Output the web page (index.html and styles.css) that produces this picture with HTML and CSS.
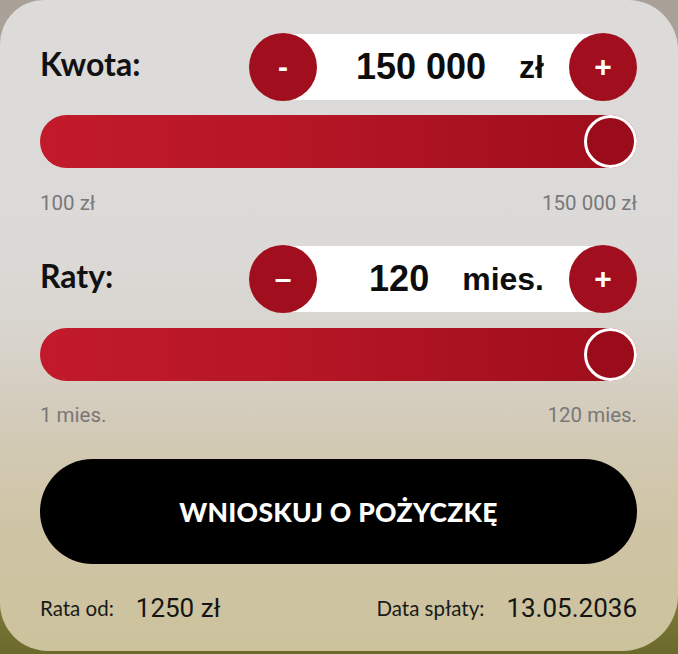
FILE: index.html
```html
<!DOCTYPE html>
<html lang="pl">
<head>
<meta charset="utf-8">
<title>Kalkulator pożyczki</title>
<link rel="stylesheet" href="styles.css">
</head>
<body>
<div class="card">
  <div class="field-head">
    <div class="label">Kwota:</div>
    <div class="stepper">
      <div class="step-btn">-</div>
      <div class="step-value"><span class="num">150 000</span><span class="unit">zł</span></div>
      <div class="step-btn">+</div>
    </div>
  </div>
  <div class="slider"><div class="thumb"></div></div>
  <div class="range"><span>100 zł</span><span>150 000 zł</span></div>

  <div class="field-head second">
    <div class="label">Raty:</div>
    <div class="stepper">
      <div class="step-btn">–</div>
      <div class="step-value"><span class="num">120</span><span class="unit">mies.</span></div>
      <div class="step-btn">+</div>
    </div>
  </div>
  <div class="slider slider-b"><div class="thumb"></div></div>
  <div class="range range-b"><span>1 mies.</span><span>120 mies.</span></div>

  <div class="cta">WNIOSKUJ O POŻYCZKĘ</div>

  <div class="summary">
    <div class="sum-item"><span class="sum-label">Rata od:</span><span class="sum-value">1250 zł</span></div>
    <div class="sum-item"><span class="sum-label">Data spłaty:</span><span class="sum-value">13.05.2036</span></div>
  </div>
</div>
</body>
</html>
```

FILE: styles.css
```css
html, body {
  margin: 0;
  padding: 0;
}
body {
  width: 678px;
  height: 654px;
  overflow: hidden;
  background: linear-gradient(180deg, #a9a097 0%, #b1a89c 55%, #a29c70 80%, #7c7a38 92%, #6b6a2c 100%);
  font-family: "Lato", "Liberation Sans", sans-serif;
}
.card {
  box-sizing: border-box;
  width: 678px;
  height: 651px;
  padding: 33px 41px 0 40px;
  border-radius: 44px 50px 56px 48px;
  background: linear-gradient(180deg, #dddbd9 0%, #dcdad8 38%, #d8d4cd 52%, #d3cab7 66%, #cfc5a6 80%, #ccc29c 100%);
}
.field-head {
  display: flex;
  align-items: center;
  justify-content: space-between;
  height: 68px;
}
.field-head.second {
  margin-top: 30px;
}
.label {
  font-family: "Lato", sans-serif;
  font-weight: 700;
  font-size: 32px;
  color: #111;
  margin-top: -7px;
}
.stepper {
  display: flex;
  align-items: center;
  width: 388px;
}
.step-btn {
  position: relative;
  z-index: 1;
  width: 68px;
  height: 68px;
  flex: none;
  border-radius: 50%;
  background: #a10e1d;
  color: #fff;
  font-family: "Liberation Sans", sans-serif;
  font-weight: 700;
  font-size: 30px;
  line-height: 68px;
  text-align: center;
}
.step-value {
  flex: 1;
  height: 66px;
  margin: 0 -34px;
  padding: 0 59px 0 34px;
  background: #fff;
  display: flex;
  align-items: center;
  justify-content: flex-end;
  gap: 33px;
  font-family: "Liberation Sans", sans-serif;
  font-weight: 700;
  color: #0d0d0d;
}
.num {
  font-size: 36px;
}
.unit {
  font-size: 32px;
}
.slider {
  margin-top: 14px;
  height: 53px;
  border-radius: 27px;
  background: linear-gradient(90deg, #c21a2b 0%, #b51626 45%, #9e0d1b 100%);
  display: flex;
  justify-content: flex-end;
}
.slider-b {
  margin-top: 15px;
}
.thumb {
  box-sizing: border-box;
  width: 53px;
  height: 53px;
  border: 3px solid #fff;
  border-radius: 50%;
  background: #9b0c1a;
}
.range {
  margin-top: 23px;
  display: flex;
  justify-content: space-between;
  font-family: "Roboto", "Liberation Sans", sans-serif;
  font-size: 20.5px;
  line-height: 24px;
  color: #787878;
}
.range-b {
  margin-top: 22px;
}
.cta {
  margin-top: 32px;
  height: 105px;
  border-radius: 53px;
  background: #000;
  color: #fff;
  display: flex;
  align-items: center;
  justify-content: center;
  font-family: "Lato", sans-serif;
  font-weight: 900;
  font-size: 26.5px;
  letter-spacing: 0.3px;
}
.summary {
  margin-top: 29px;
  display: flex;
  justify-content: space-between;
  align-items: center;
  height: 30px;
}
.sum-item {
  display: flex;
  align-items: center;
  gap: 22px;
}
.sum-label {
  font-family: "Lato", sans-serif;
  font-size: 20.5px;
  color: #1a1a1a;
}
.sum-value {
  font-family: "Roboto", sans-serif;
  font-size: 26px;
  color: #151515;
}
```
